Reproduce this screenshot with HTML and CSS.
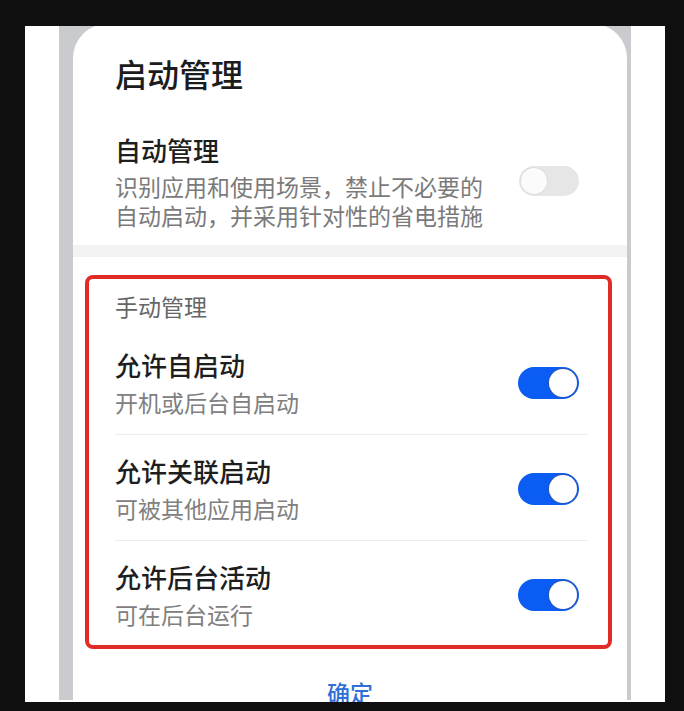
FILE: index.html
```html
<!DOCTYPE html>
<html lang="zh-CN">
<head>
<meta charset="utf-8">
<title>启动管理</title>
<link rel="stylesheet" href="styles.css">
</head>
<body>
<div class="frame">
  <div class="phone">
    <div class="card">
      <div class="card-title">启动管理</div>
      <div class="auto-row">
        <div class="auto-text">
          <div class="auto-title">自动管理</div>
          <div class="auto-desc">识别应用和使用场景，禁止不必要的自动启动，并采用针对性的省电措施</div>
        </div>
        <div class="switch switch-off"><span class="knob"></span></div>
      </div>
      <div class="band"></div>
      <div class="manual">
        <div class="manual-label">手动管理</div>
        <div class="item">
          <div class="item-text">
            <div class="item-title">允许自启动</div>
            <div class="item-sub">开机或后台自启动</div>
          </div>
          <div class="switch switch-on"><span class="knob"></span></div>
        </div>
        <div class="item">
          <div class="item-text">
            <div class="item-title">允许关联启动</div>
            <div class="item-sub">可被其他应用启动</div>
          </div>
          <div class="switch switch-on"><span class="knob"></span></div>
        </div>
        <div class="item item-last">
          <div class="item-text">
            <div class="item-title">允许后台活动</div>
            <div class="item-sub">可在后台运行</div>
          </div>
          <div class="switch switch-on"><span class="knob"></span></div>
        </div>
      </div>
      <div class="confirm">确定</div>
    </div>
  </div>
</div>
</body>
</html>
```

FILE: styles.css
```css
html, body {
  margin: 0;
  padding: 0;
  height: 100%;
  overflow: hidden;
  background: #0f0f0f;
  font-family: "Noto Sans CJK SC", "Noto Sans", sans-serif;
}

.frame {
  margin: 26px 0 0 25px;
  width: 640px;
  height: 676px;
  background: #ffffff;
  overflow: hidden;
}

.phone {
  margin-left: 34px;
  width: 572px;
  height: 100%;
  box-sizing: border-box;
  padding: 0 4px 0 14px;
  background: #c9cbce;
}

.card {
  margin-top: -2px;
  height: calc(100% + 2px);
  background: #ffffff;
  border-radius: 34px 34px 0 0;
  overflow: hidden;
}

.card-title {
  padding: 29px 42px 0;
  font-size: 32px;
  line-height: 40px;
  font-weight: 500;
  color: #1c1c1c;
}

.auto-row {
  margin-top: 39px;
  padding: 0 48px 15px 42px;
  display: flex;
  align-items: center;
  justify-content: space-between;
}

.auto-text {
  width: 372px;
}

.auto-title {
  font-size: 26px;
  line-height: 36px;
  font-weight: 500;
  color: #1e1e1e;
}

.auto-desc {
  margin-top: 4px;
  font-size: 23px;
  line-height: 29px;
  color: #7a7a7a;
}

.band {
  height: 12px;
  background: #f3f3f3;
}

.manual {
  margin: 18px 15px 0 12px;
  border: 4px solid #e02b27;
  border-radius: 8px;
  padding-top: 12px;
}

.manual-label {
  padding-left: 26px;
  font-size: 23px;
  line-height: 30px;
  color: #666666;
  margin-bottom: 8px;
}

.item {
  margin: 0 20px 0 26px;
  padding: 19px 9px 17px 0;
  border-bottom: 1px solid #ededed;
  display: flex;
  align-items: center;
  justify-content: space-between;
}

.item-last {
  border-bottom: none;
  padding-bottom: 16px;
}

.item-title {
  font-size: 26px;
  line-height: 34px;
  font-weight: 500;
  color: #1e1e1e;
}

.item-sub {
  margin-top: 5px;
  font-size: 23px;
  line-height: 30px;
  color: #808080;
}

.switch {
  flex: none;
  position: relative;
  border-radius: 16px;
}

.switch-off {
  width: 60px;
  height: 30px;
  background: #e6e6e6;
}

.switch-off .knob {
  position: absolute;
  left: 2px;
  top: 2px;
  width: 26px;
  height: 26px;
  border-radius: 50%;
  background: #fbfbfb;
  box-shadow: 0 0 2px rgba(0, 0, 0, 0.12);
}

.switch-on {
  width: 61px;
  height: 32px;
  background: #0b5cf2;
}

.switch-on .knob {
  position: absolute;
  right: 2px;
  top: 2px;
  width: 28px;
  height: 28px;
  border-radius: 50%;
  background: #ffffff;
  box-shadow: 0 0 0 1px #2a55b8;
}

.confirm {
  margin-top: 23px;
  text-align: center;
  font-size: 23px;
  line-height: 40px;
  font-weight: 500;
  color: #2f6fd6;
}
```
